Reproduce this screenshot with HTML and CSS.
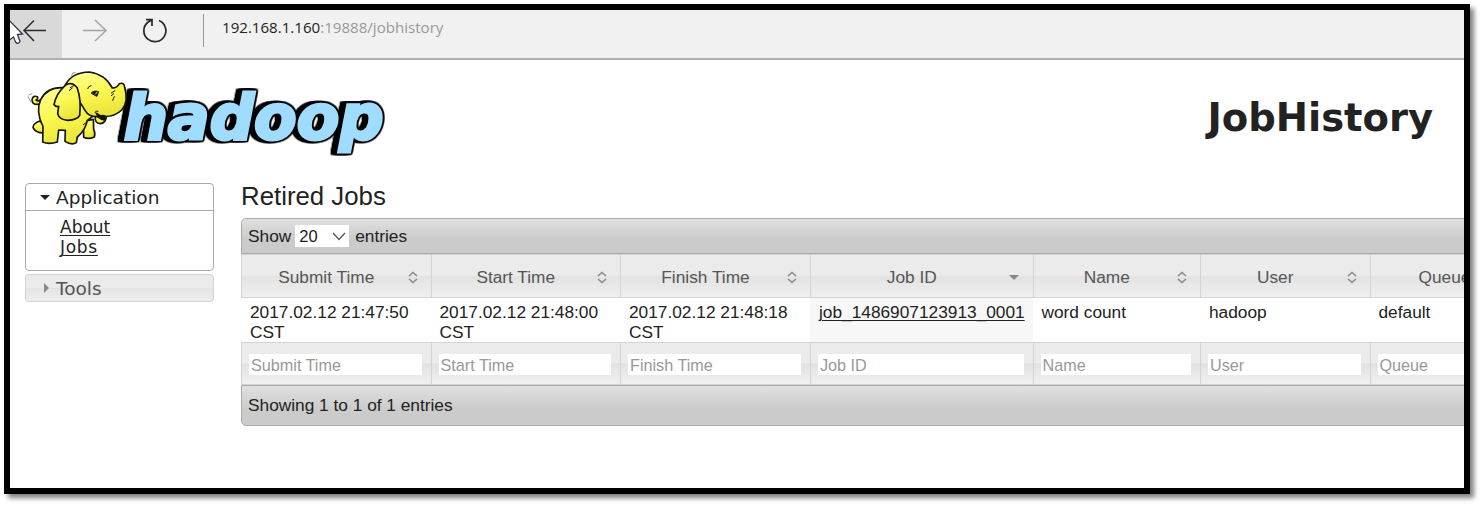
FILE: index.html
```html
<!DOCTYPE html>
<html lang="en">
<head>
<meta charset="utf-8">
<title>JobHistory</title>
<link rel="stylesheet" href="styles.css">
</head>
<body>
<div class="window">
  <div class="toolbar">
    <div class="back">
      <svg width="52" height="48" viewBox="10 10 52 48" fill="none">
        <path d="M46 30.5H24M34 20.5L24 30.5L34 41" stroke="#2b2b2b" stroke-width="1.5"/>
        <path d="M8 19L22.5 34L17.5 34.5L20 41.5Q18 45 15.500 42L13.500 37L8 41Z" fill="#fff" stroke="#34344a" stroke-width="1.3"/>
      </svg>
    </div>
    <svg class="forward" width="26" height="24" viewBox="0 0 26 24" fill="none" stroke="#a5a5a5" stroke-width="1.5"><path d="M1 12.500H24M13 2L24 12.500L13 23"/></svg>
    <svg class="reload" width="26" height="28" viewBox="142 16 26 28" fill="none" stroke="#282828" stroke-width="1.7"><path d="M159 20.500A11 11 0 1 1 147.500 22.500L151.500 20M146 19.700H152V26"/></svg>
    <span class="divider"></span>
    <div class="url"><b>192.168.1.160</b>:19888/jobhistory</div>
  </div>

  <div class="header">
    <svg class="logo" width="380" height="100" viewBox="0 0 1140 300" role="img">
      <defs>
        <linearGradient id="skin" x1="0" y1="0" x2="0.3" y2="1">
          <stop offset="0" stop-color="#ffff9c"/><stop offset=".55" stop-color="#fbf84f"/><stop offset="1" stop-color="#ebe63c"/>
        </linearGradient>
      </defs>
      <text class="wordmark" x="326" y="236" textLength="780" lengthAdjust="spacingAndGlyphs">hadoop</text>
      <g fill="url(#skin)" stroke="#15150c" stroke-width="5" stroke-linejoin="round" stroke-linecap="round">
        <path d="M75 132Q51 137 51 119Q54 105 67 110Q71 116 63 120Q69 126 77 119" />
        <path d="M74 183Q54 190 54 203Q62 219 85 219L91 197Z"/>
        <path d="M205 184L206 232Q221 239 238 231Q242 220 236 208L235 178Z"/>
        <path d="M141 83Q96 82 77 119Q61 154 84 200L83 246Q102 254 127 246L131 210L151 211L150 244Q170 257 184 248L187 231Q211 211 217 181L245 160L225 95Z"/>
        <path d="M241 166Q238 191 256 191Q272 190 274 169"/>
        <path d="M151 75Q171 37 223 36Q271 43 292 84Q305 85 313 71Q328 66 329 82Q342 128 320 150Q297 173 258 169Q223 174 210 151Q193 119 151 75Z"/>
        <path d="M151 76Q123 101 117 134Q124 142 131 139L128 161Q132 179 158 181Q188 179 194 166Q199 119 187 85Q172 63 151 76Z"/>
        <path d="M245 160Q248 176 267 180Q277 163 256 168Z" fill="#15150c"/>
        <g fill="none" stroke-width="3">
          <path d="M166 83L176 77M163 91L172 84M218 86Q219 78 228 77M241 159Q239 151 249 154M289 99L300 92M289 107L296 101M293 121L298 110M205 194L213 188"/>
          <path d="M39 110L47 125M42 105L51 101M169 50L173 39L181 38" stroke="#999"/>
          <path d="M229 99Q236 90 251 95L246 108Z" fill="#15150c"/>
          <path d="M242 101L247 97" stroke="#fff"/>
        </g>
      </g>
    </svg>
    <h1>JobHistory</h1>
  </div>

  <div class="main">
    <div class="nav">
      <div class="panel">
        <div class="panel-title"><i class="tri down"></i>Application</div>
        <div class="links"><a>About</a><a class="jobs">Jobs</a></div>
      </div>
      <div class="closed"><i class="tri right"></i>Tools</div>
    </div>
    <div class="content">
      <h2>Retired Jobs</h2>
      <div class="table">
        <div class="bar top">Show <span class="select">20<svg width="14" height="9" viewBox="0 0 14 9"><path d="M1 1L7 7.500L13 1" fill="none" stroke="#555" stroke-width="1.3"/></svg></span> entries</div>
        <div class="row heads">
          <div class="th">Submit Time<svg class="sort" viewBox="0 0 10 13"><path d="M1 5L5 1.500L9 5M1 8L5 11.500L9 8"/></svg></div>
          <div class="th">Start Time<svg class="sort" viewBox="0 0 10 13"><path d="M1 5L5 1.500L9 5M1 8L5 11.500L9 8"/></svg></div>
          <div class="th">Finish Time<svg class="sort" viewBox="0 0 10 13"><path d="M1 5L5 1.500L9 5M1 8L5 11.500L9 8"/></svg></div>
          <div class="th">Job ID<i class="tri down sorted"></i></div>
          <div class="th">Name<svg class="sort" viewBox="0 0 10 13"><path d="M1 5L5 1.500L9 5M1 8L5 11.500L9 8"/></svg></div>
          <div class="th">User<svg class="sort" viewBox="0 0 10 13"><path d="M1 5L5 1.500L9 5M1 8L5 11.500L9 8"/></svg></div>
          <div class="th queue">Queue</div>
        </div>
        <div class="row data">
          <div>2017.02.12 21:47:50 CST</div>
          <div>2017.02.12 21:48:00 CST</div>
          <div>2017.02.12 21:48:18 CST</div>
          <div class="active"><a>job_1486907123913_0001</a></div>
          <div>word count</div>
          <div>hadoop</div>
          <div>default</div>
        </div>
        <div class="row filters">
          <div><span>Submit Time</span></div>
          <div><span>Start Time</span></div>
          <div><span>Finish Time</span></div>
          <div><span>Job ID</span></div>
          <div><span>Name</span></div>
          <div><span>User</span></div>
          <div><span>Queue</span></div>
        </div>
        <div class="bar bottom">Showing 1 to 1 of 1 entries</div>
      </div>
    </div>
  </div>
</div>
</body>
</html>
```

FILE: styles.css
```css
* { box-sizing: border-box; }
body {
  margin: 0;
  padding: 4px;
  height: 507px;
  overflow: hidden;
  background: #fff;
  color: #222;
  font-family: "Liberation Sans", Arial, sans-serif;
  font-size: 17.3px;
}
.window {
  width: 1466px;
  height: 490px;
  border: 6px solid #000;
  background: #fff;
  box-shadow: 4px 4px 5px rgba(0, 0, 0, .5);
}
.toolbar {
  display: flex;
  height: 50px;
  background: #f1f1f1;
  border-bottom: 2px solid #b0b0b0;
}
.back { width: 52px; height: 48px; background: #d9d9d9; }
.forward { margin: 8px 0 0 20px; }
.reload { margin: 6px 0 0 34px; }
.divider { width: 1px; height: 33px; margin: 4px 0 0 35px; background: #979797; }
.url {
  margin: 7px 0 0 18px;
  font: 15.1px/21px "Open Sans", sans-serif;
  color: #999;
  white-space: nowrap;
}
.url b { font-weight: 400; color: #222; }

.header { display: flex; justify-content: space-between; height: 123px; padding: 0 31px 0 5px; }
.logo { overflow: visible; }
.wordmark {
  font: italic bold 186px "DejaVu Sans", sans-serif;
  fill: #9fdcff;
  stroke: #9fdcff;
  stroke-width: 9px;
  stroke-linejoin: miter;
  filter: drop-shadow(4px 0 0 #000) drop-shadow(0 4px 0 #000) drop-shadow(0 -5px 0 #000) drop-shadow(-7px 0 0 #000) drop-shadow(-12px 0 0 #000);
}
h1 { margin: 34px 0 0; font: bold 38.500px/48px "DejaVu Sans", sans-serif; letter-spacing: 0; }

.main { display: flex; }
.nav { flex: none; width: 189px; margin-left: 15px; font-family: "DejaVu Sans", sans-serif; }
.panel { height: 88px; border: 1px solid #aaa; border-radius: 4px; }
.panel-title, .closed { display: flex; align-items: center; height: 27px; font-size: 18.500px; }
.panel-title { border-bottom: 1px solid #aaa; }
.links { display: flex; flex-direction: column; align-items: flex-start; padding: 6px 0 0 34px; font-size: 17px; line-height: 20px; }
.links a, .active a { text-decoration: underline; text-decoration-thickness: 1px; text-underline-offset: 2px; }
.jobs { letter-spacing: .7px; }
.closed {
  height: 28px;
  margin-top: 3px;
  border: 1px solid #d3d3d3;
  border-radius: 4px;
  background: linear-gradient(#ebebeb 0 50%, #e4e4e4 52%, #eee);
  color: #555;
}
.tri { flex: none; }
.down { border: 5px solid transparent; border-top-color: #222; border-bottom: 0; }
.right { border: 5px solid transparent; border-left-color: #888; border-right: 0; }
.panel-title .tri { margin: 0 6px 0 14px; }
.closed .tri { margin: 0 7px 0 18px; }

.content { width: 1223px; margin-left: 27px; overflow: hidden; flex: none; }
h2 { margin: 0; height: 35px; font-size: 25.800px; font-weight: 400; line-height: 27px; }
.table { width: 1340px; }
.bar { border: 1px solid #aaa; background: linear-gradient(#e0e0e0, #cbcbcb 60%, #cbcbcb); padding-left: 6px; }
.top { display: flex; align-items: center; height: 36px; border-radius: 5px 0 0 0; }
.bottom { height: 41px; line-height: 38px; border-radius: 0 0 0 5px; }
.select { display: flex; justify-content: space-between; align-items: center; width: 54px; height: 22px; margin: 0 6px 0 4px; padding: 0 3px 0 4px; background: #fff; font-size: 16.500px; }
.row { display: grid; grid-template-columns: 189.500px 189.500px 190px 222.500px 167.500px 169.500px 211px; }
.th, .filters > div { border: 1px solid #d3d3d3; border-right: 0; background: linear-gradient(#ebebeb 0 48%, #e2e2e2 52%, #f0f0f0); }
.th { display: flex; align-items: center; justify-content: center; position: relative; height: 44px; padding: 3px 20px 0 0; color: #555; }
.queue { justify-content: flex-start; padding-left: 48px; }
.sort { position: absolute; right: 13px; top: 16px; width: 10px; height: 13px; fill: none; stroke: #888; stroke-width: 1.500px; }
.sorted { position: absolute; right: 14px; top: 20px; border-top-color: #888; }
.data > div { height: 44px; padding: 4px 20px 0 9px; line-height: 20px; }
.data .active { background: #f7f7f7; padding-right: 0; }
.filters > div { height: 43px; padding: 11px 9px 0 7px; }
.filters span { display: block; height: 21px; padding-left: 2px; background: #fff; color: #999; font-size: 16.200px; line-height: 22px; }
```
